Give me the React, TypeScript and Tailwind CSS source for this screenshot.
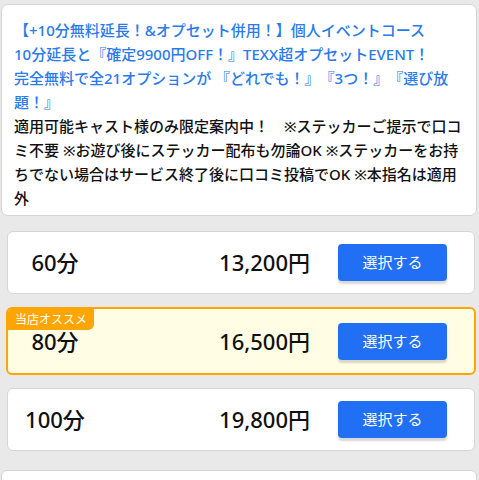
import React from "react";

const font = { fontFamily: '"Noto Sans", "Noto Sans CJK JP", sans-serif' };

function Option({ label, price, recommended }: { label: string; price: string; recommended?: boolean }) {
  const base = recommended
    ? "relative ml-[6px] w-[470px] h-[68px] border-2 border-[#ffa500] bg-[#fffde4] rounded-[6px]"
    : "relative ml-[7px] w-[468px] h-[63px] border border-[#d6d6d6] bg-white rounded-[6px]";
  return (
    <div className={base + " flex items-center"}>
      {recommended && (
        <div className="absolute left-0 top-0 h-[21px] px-[7px] flex items-center bg-[#ffa500] text-white text-[12px] rounded-tl-[4px] rounded-br-[6px]">
          当店オススメ
        </div>
      )}
      <div className="w-[94px] text-center text-[22px] font-medium text-[#111]">{label}</div>
      <div className="flex-1 text-right text-[22px] font-medium text-[#111]">{price}</div>
      <button className="ml-[28px] mr-[27px] w-[109px] h-[37px] rounded-[4px] bg-[#216ff4] text-white text-[15px] shadow-[0_3px_2px_rgba(0,0,0,0.15)]">
        選択する
      </button>
    </div>
  );
}

const blueLines = [
  "【+10分無料延長！&オプセット併用！】個人イベントコース",
  "10分延長と『確定9900円OFF！』TEXX超オプセットEVENT！",
  "完全無料で全21オプションが 『どれでも！』『3つ！』『選び放",
  "題！』",
];
const blackLines = [
  "適用可能キャスト様のみ限定案内中！　※ステッカーご提示で口コ",
  "ミ不要 ※お遊び後にステッカー配布も勿論OK ※ステッカーをお持",
  "ちでない場合はサービス終了後に口コミ投稿でOK ※本指名は適用",
  "外",
];

export default function App() {
  return (
    <div className="w-[479px] h-[480px] overflow-hidden bg-[#e9e9e9] [text-spacing-trim:space-all]" style={font}>
      <div className="pt-[4px]">
        <div className="ml-[1px] w-[476px] h-[212px] bg-white border border-[#d4d4d4] rounded-[7px] pt-[13px] pl-[12px] pr-[4px] text-[15px] leading-[24px] font-medium">
          <div className="text-[#2a7aeb]">
            {blueLines.map((l, i) => (
              <div key={i} className="whitespace-pre">{l}</div>
            ))}
          </div>
          <div className="text-[#111]">
            {blackLines.map((l, i) => (
              <div key={i} className="whitespace-pre">{l}</div>
            ))}
          </div>
        </div>
      </div>
      <div className="mt-[15px] flex flex-col">
        <Option label="60分" price="13,200円" />
        <div className="h-[13px]" />
        <Option label="80分" price="16,500円" recommended />
        <div className="h-[13px]" />
        <Option label="100分" price="19,800円" />
      </div>
      <div className="mt-[19px] ml-[1px] w-[476px] h-[40px] bg-white border border-[#d4d4d4] rounded-t-[6px]" />
    </div>
  );
}
